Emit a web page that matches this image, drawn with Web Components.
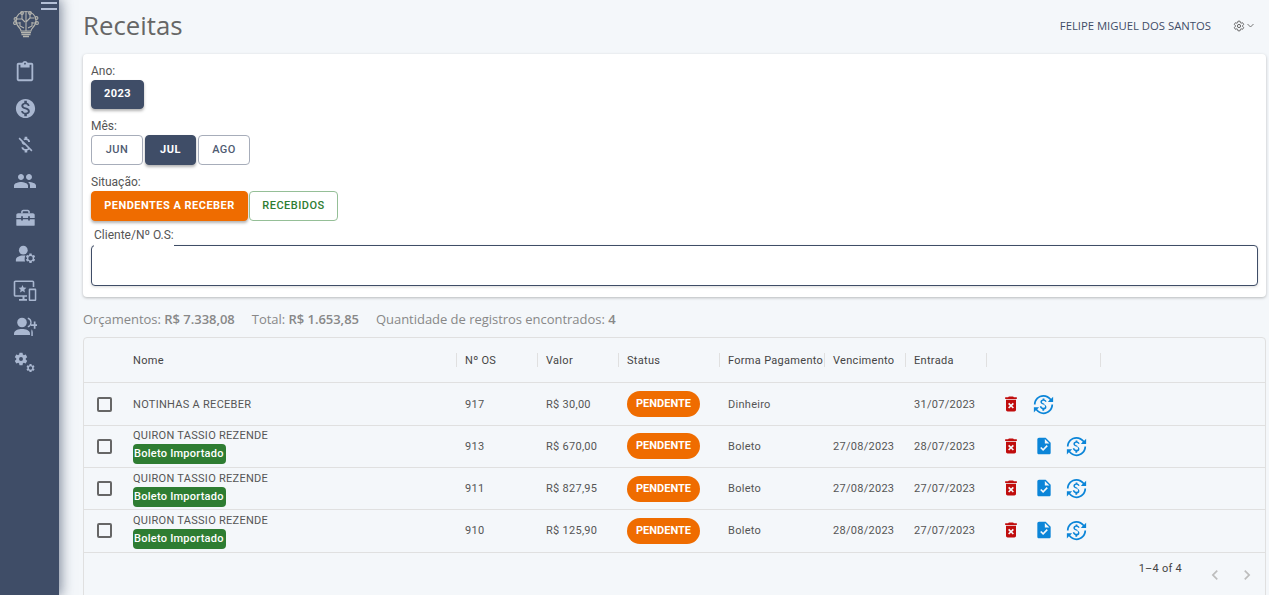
<!DOCTYPE html>
<html lang="pt-BR">
<head>
<meta charset="utf-8">
<title>Receitas</title>
<style>
  html, body { margin: 0; height: 100%; overflow: hidden; background: #f4f7fa; }
  body { font-family: Roboto, "Liberation Sans", sans-serif; }
</style>
</head>
<body>
<app-shell>
  <side-nav slot="nav"></side-nav>
  <page-top title-text="Receitas" user="FELIPE MIGUEL DOS SANTOS"></page-top>
  <filter-card>
    <filter-group label="Ano:">
      <pill-button variant="dark" w="53" h="29">2023</pill-button>
    </filter-group>
    <filter-group label="Mês:">
      <pill-button w="52">JUN</pill-button>
      <pill-button variant="dark" w="51">JUL</pill-button>
      <pill-button w="52">AGO</pill-button>
    </filter-group>
    <filter-group label="Situação:">
      <pill-button variant="orange" w="157">PENDENTES A RECEBER</pill-button>
      <pill-button variant="green" w="89">RECEBIDOS</pill-button>
    </filter-group>
    <text-field label="Cliente/Nº O.S:"></text-field>
  </filter-card>
  <summary-bar>
    <span>Orçamentos: <b>R$ 7.338,08</b></span>
    <span>Total: <b>R$ 1.653,85</b></span>
    <span>Quantidade de registros encontrados: <b>4</b></span>
  </summary-bar>
  <data-grid></data-grid>
</app-shell>

<script>
const GEAR = 'M19.14 12.940c.04-.3.06-.61.06-.94 0-.32-.02-.64-.07-.94l2.030-1.580c.18-.14.23-.41.12-.61l-1.920-3.320c-.12-.22-.37-.29-.59-.22l-2.390.96c-.5-.38-1.030-.7-1.620-.94l-.36-2.540c-.04-.24-.24-.41-.48-.41h-3.840c-.24 0-.43.17-.47.41l-.36 2.540c-.59.24-1.130.57-1.620.94l-2.390-.96c-.22-.08-.47 0-.59.22L2.740 8.870c-.12.21-.08.47.12.61l2.030 1.580c-.05.3-.09.63-.09.94s.02.64.07.94l-2.030 1.580c-.18.14-.23.41-.12.61l1.920 3.320c.12.22.37.29.59.22l2.390-.96c.5.38 1.030.7 1.620.94l.36 2.540c.05.24.24.41.48.41h3.840c.24 0 .44-.17.47-.41l.36-2.540c.59-.24 1.130-.56 1.620-.94l2.390.96c.22.08.47 0 .59-.22l1.920-3.320c.12-.22.07-.47-.12-.61l-2.010-1.580z'

const ICONS = {
  clipboard: '<path d="M19 2h-4.18C14.4.84 13.3 0 12 0c-1.3 0-2.4.84-2.82 2H5c-1.1 0-2 .9-2 2v16c0 1.1.9 2 2 2h14c1.1 0 2-.9 2-2V4c0-1.1-.9-2-2-2zm-7 0c.55 0 1 .45 1 1s-.45 1-1 1-1-.45-1-1 .45-1 1-1zm7 18H5V4h2v3h10V4h2v16z"/>',
  dollar: '<path d="M12 2C6.48 2 2 6.48 2 12s4.48 10 10 10 10-4.48 10-10S17.52 2 12 2zm1.41 16.09V20h-2.67v-1.93c-1.71-.36-3.16-1.46-3.27-3.4h1.96c.1 1.05.82 1.87 2.65 1.87 1.96 0 2.4-.98 2.4-1.59 0-.83-.44-1.61-2.67-2.14-2.48-.6-4.18-1.62-4.18-3.67 0-1.72 1.39-2.84 3.11-3.21V4h2.67v1.95c1.86.45 2.79 1.86 2.85 3.39H14.3c-.05-1.11-.64-1.87-2.22-1.87-1.5 0-2.4.68-2.4 1.64 0 .84.65 1.39 2.67 1.91s4.18 1.39 4.18 3.91c-.01 1.83-1.38 2.83-3.12 3.16z"/>',
  moneyoff: '<path d="M12.5 6.9c1.78 0 2.44.85 2.5 2.1h2.21c-.07-1.72-1.12-3.3-3.21-3.81V3h-3v2.16c-.53.12-1.03.3-1.48.54l1.47 1.47c.41-.17.91-.27 1.51-.27zM5.33 4.06 4.06 5.33 7.5 8.77c0 2.08 1.56 3.21 3.91 3.91l3.51 3.51c-.34.48-1.05.91-2.42.91-2.06 0-2.87-.92-2.98-2.1h-2.2c.12 2.19 1.76 3.42 3.68 3.83V21h3v-2.15c.96-.18 1.82-.55 2.45-1.12l2.22 2.22 1.27-1.27L5.33 4.06z"/>',
  people: '<path d="M16 11c1.66 0 2.99-1.34 2.99-3S17.66 5 16 5c-1.66 0-3 1.34-3 3s1.34 3 3 3zm-8 0c1.66 0 2.99-1.34 2.99-3S9.66 5 8 5C6.34 5 5 6.34 5 8s1.34 3 3 3zm0 2c-2.33 0-7 1.17-7 3.5V19h14v-2.5c0-2.33-4.67-3.5-7-3.5zm8 0c-.29 0-.62.02-.97.05 1.16.84 1.97 1.97 1.97 3.45V19h6v-2.5c0-2.33-4.67-3.5-7-3.5z"/>',
  toolbox: '<path d="M7 7V5.500C7 4.100 8.100 3 9.500 3h5C15.900 3 17 4.100 17 5.500V7h-1.800V5.600c0-.5-.3-.8-.8-.8H9.600c-.5 0-.8.3-.8.8V7z"/><path d="M1.500 9c0-1.100.9-2 2-2h17c1.100 0 2 .9 2 2v3.500H17v-1.800h-2v1.800H9v-1.800H7v1.800H1.500z"/><path d="M1.500 14h5.500v1.500h2V14h6v1.500h2V14h5.500v6.500c0 .6-.4 1-1 1h-19c-.6 0-1-.4-1-1z"/>',
  manage: `<circle cx="9.500" cy="7" r="5"/><path d="M1 20v-2c0-3 4-5 8.500-5 .9 0 1.700.1 2.500.2-.6 1.100-1 2.400-1 3.800 0 1.100.2 2.100.6 3z"/><g transform="translate(11 9.500) scale(.56)"><path fill-rule="evenodd" d="${GEAR}M12 16.500a4.500 4.500 0 1 1 0-9 4.500 4.500 0 0 1 0 9z"/></g>`,
  devices: '<path fill-rule="evenodd" d="M2.500 1.500h17c1 0 1.800.8 1.800 1.800V8h-1.600V3.300c0-.1-.1-.2-.2-.2h-17c-.1 0-.2.1-.2.2V16c0 .1.1.2.2.2h11.500v1.600H11.500V20H14v1.800H6V20h3.500v-2.200h-7c-1 0-1.800-.8-1.800-1.800V3.300c0-1 .8-1.800 1.800-1.800z"/><path d="m9.500 6 1.100 2.600 2.800.2-2.100 1.900.7 2.800-2.500-1.500L7 13.500l.7-2.800-2.100-1.900 2.800-.2z"/><path fill-rule="evenodd" d="M17 9.500h5c.8 0 1.300.5 1.300 1.300v10c0 .8-.5 1.300-1.300 1.300h-5c-.8 0-1.300-.5-1.300-1.300v-10c0-.8.5-1.300 1.300-1.300zm.2 1.700v9.200h4.600v-9.200z"/>',
  personadd: '<circle cx="9" cy="7.500" r="4.800"/><path d="M1 20v-1.500C1 15.400 5.500 14 9 14s8 1.400 8 4.500V20z"/><path d="M14.800 3.200c1.800.6 3.200 2.300 3.200 4.300s-1.400 3.700-3.200 4.300" fill="none" stroke="currentColor" stroke-width="1.300"/><path d="M18.700 14.300c.7.9 1.100 2 1.100 3.200V21h-1.500v-5z"/><path d="M20.800 6.500h1.700v2.800h1.500v1.700h-1.500v2.800h-1.700V11H18V9.300h2.800z"/>',
  gears: `<g transform="translate(-1 -1) scale(.72)"><path fill-rule="evenodd" d="${GEAR}M12 15a3 3 0 1 1 0-6 3 3 0 0 1 0 6z"/></g><g transform="translate(12.500 12) scale(.46)"><path fill-rule="evenodd" d="${GEAR}M12 16a4 4 0 1 1 0-8 4 4 0 0 1 0 8z"/></g>`,
  gearline: `<path fill="none" stroke="currentColor" stroke-width="2" d="${GEAR}"/><circle cx="12" cy="12" r="3.200" fill="none" stroke="currentColor" stroke-width="2"/>`,
  chevdown: '<path d="M4 8l8 8 8-8" fill="none" stroke="currentColor" stroke-width="2.400"/>',
  chevleft: '<path d="M15.410 7.410 14 6l-6 6 6 6 1.410-1.410L10.830 12z"/>',
  chevright: '<path d="M10 6 8.590 7.410 13.170 12l-4.580 4.590L10 18l6-6z"/>',
  trash: '<path d="M6 19c0 1.100.9 2 2 2h8c1.100 0 2-.9 2-2V7H6v12zm2.460-7.120 1.410-1.410L12 12.590l2.120-2.120 1.410 1.410L13.410 14l2.120 2.120-1.410 1.410L12 15.410l-2.120 2.120-1.410-1.410L10.590 14l-2.130-2.120zM15.500 4l-1-1h-5l-1 1H5v2h14V4z"/>',
  filecheck: '<path d="M14 2H6c-1.100 0-2 .9-2 2v16c0 1.100.9 2 2 2h12c1.100 0 2-.9 2-2V8l-6-6zm-3.060 16L7.400 14.460l1.410-1.410 2.120 2.120 4.240-4.240 1.410 1.410L10.940 18zM13 9V3.500L18.500 9H13z"/>',
  exchange: '<path d="M12.890 11.100c-1.780-.59-2.640-.96-2.640-1.900 0-1.020 1.110-1.390 1.810-1.390 1.310 0 1.790.99 1.900 1.340l1.580-.67c-.15-.44-.82-1.910-2.540-2.280V5h-2v1.260c-.48.11-2.560.66-2.560 2.720 0 1.600 1.270 2.510 3.060 3.150 1.570.56 2.260 1.070 2.260 2.030 0 1.130-1.050 1.610-1.980 1.610-1.820 0-2.340-1.870-2.400-2.090l-1.660.67c.63 2.190 2.280 2.780 3.020 2.960V19h2v-1.240c.52-.09 2.580-.5 2.580-2.700.01-1.160-.5-2.180-2.430-2.960z"/><path d="M3 12C3 7 7 3 12 3c3 0 5.600 1.500 7.200 3.700L17 9h6V3l-2.300 2.300C18.700 2.700 15.500 1 12 1 5.900 1 1 5.900 1 12zM21 12c0 5-4 9-9 9-3 0-5.600-1.500-7.200-3.700L7 15H1v6l2.300-2.300C5.300 21.300 8.500 23 12 23c6.100 0 11-4.900 11-11z"/>',
}

class XIcon extends HTMLElement {
  connectedCallback() {
    const size = this.getAttribute('size') || 24
    const root = this.shadowRoot || this.attachShadow({ mode: 'open' })
    root.innerHTML = `
      <style>
        :host { display: inline-flex; flex: none; color: inherit; }
        svg { display: block; fill: currentColor; }
      </style>
      <svg width="${size}" height="${size}" viewBox="0 0 24 24">${ICONS[this.getAttribute('name')] || ''}</svg>`
  }
}
customElements.define('x-icon', XIcon)

const shellTpl = document.createElement('template')
shellTpl.innerHTML = `
  <style>
    :host { display: flex; height: 595px; overflow: hidden; }
    .main { flex: 1; min-width: 0; padding: 0 3px 0 24px; display: flex; flex-direction: column; }
  </style>
  <slot name="nav"></slot>
  <div class="main"><slot></slot></div>
`
class AppShell extends HTMLElement {
  constructor() {
    super()
    this.attachShadow({ mode: 'open' }).appendChild(shellTpl.content.cloneNode(true))
  }
}
customElements.define('app-shell', AppShell)

const navTpl = document.createElement('template')
navTpl.innerHTML = `
  <style>
    :host {
      display: flex; flex-direction: column; flex: none; width: 59px; height: 595px;
      background: #3f4d67; color: #a9b7d0;
      box-shadow: 1px 0 12px 1px rgba(63, 77, 103, .65);
      position: relative; z-index: 2;
    }
    .burger { align-self: flex-end; display: flex; flex-direction: column; gap: 4px; margin: 2px 2px 0 0; }
    .burger i { display: block; width: 16px; height: 2px; background: #b4c0d6; }
    .logo { display: flex; justify-content: center; margin: 0 7px 0 0; height: 28px; }
    nav { display: flex; flex-direction: column; align-items: center; margin: 16px 9px 0 0; }
    nav div { height: 36.4px; display: flex; align-items: center; justify-content: center; }
  </style>
  <div class="burger"><i></i><i></i></div>
  <div class="logo">
    <svg width="26" height="28" viewBox="0 0 26 28" fill="none" stroke="#b4b4ae" stroke-width="1.100">
      <path d="M13 1.500C7 1.500 3 5.500 3 10.500c0 3.500 2 6 3.500 7.500 1 1 1.500 2 1.500 3h10c0-1 .5-2 1.500-3 1.500-1.500 3.500-4 3.500-7.500 0-5-4-9-10-9z"/>
      <path d="M13 1.500V21M9 3v6H4M9 9l3 3M17 3v5h4M17 8l-4 4M7 12v4l4 2M19 12v4l-4 2M3 13h4M23 13h-4"/>
      <circle cx="9" cy="3" r="1.400"/><circle cx="17" cy="3" r="1.400"/><circle cx="2.500" cy="9" r="1.400"/><circle cx="23.500" cy="8" r="1.400"/><circle cx="2" cy="13" r="1.400"/><circle cx="24" cy="13" r="1.400"/>
      <path d="M8 22.500h10M8.500 24.500h9M10 26.500h6" stroke-width="1.500"/>
    </svg>
  </div>
  <nav>
    <div><x-icon name="clipboard" size="22"></x-icon></div>
    <div><x-icon name="dollar" size="23"></x-icon></div>
    <div><x-icon name="moneyoff" size="21"></x-icon></div>
    <div><x-icon name="people" size="24"></x-icon></div>
    <div><x-icon name="toolbox" size="21"></x-icon></div>
    <div><x-icon name="manage" size="21"></x-icon></div>
    <div><x-icon name="devices" size="24"></x-icon></div>
    <div><x-icon name="personadd" size="24"></x-icon></div>
    <div><x-icon name="gears" size="22"></x-icon></div>
  </nav>
`
class SideNav extends HTMLElement {
  constructor() {
    super()
    this.attachShadow({ mode: 'open' }).appendChild(navTpl.content.cloneNode(true))
  }
}
customElements.define('side-nav', SideNav)

class PageTop extends HTMLElement {
  connectedCallback() {
    const root = this.shadowRoot || this.attachShadow({ mode: 'open' })
    root.innerHTML = `
      <style>
        :host { display: flex; align-items: center; height: 54px; flex: none; font-family: "Open Sans", sans-serif; }
        h1 { margin: 0 0 5px; font-size: 25.800px; font-weight: 400; color: #666; flex: 1; }
        .user { font-size: 11.300px; color: #3f4d67; margin-right: 22px; margin-bottom: 3px; }
        .gear { display: flex; align-items: center; gap: 1px; color: #666; margin-right: 11px; margin-bottom: 3px; }
      </style>
      <h1>${this.getAttribute('title-text')}</h1>
      <span class="user">${this.getAttribute('user')}</span>
      <span class="gear"><x-icon name="gearline" size="12"></x-icon><x-icon name="chevdown" size="9"></x-icon></span>`
  }
}
customElements.define('page-top', PageTop)

const cardTpl = document.createElement('template')
cardTpl.innerHTML = `
  <style>
    :host {
      display: flex; flex-direction: column; gap: 9px; flex: none;
      height: 243px; box-sizing: border-box; padding: 9px 8px 11px 8px;
      background: #fff; border-radius: 4px;
      box-shadow: 0 1px 3px rgba(0, 0, 0, .25);
    }
  </style>
  <slot></slot>
`
class FilterCard extends HTMLElement {
  constructor() {
    super()
    this.attachShadow({ mode: 'open' }).appendChild(cardTpl.content.cloneNode(true))
  }
}
customElements.define('filter-card', FilterCard)

class FilterGroup extends HTMLElement {
  connectedCallback() {
    const root = this.shadowRoot || this.attachShadow({ mode: 'open' })
    root.innerHTML = `
      <style>
        :host { display: block; }
        label { display: block; font: 400 12px/16px Roboto, sans-serif; color: #555; margin-bottom: 1px; }
        .row { display: flex; gap: 2px; }
      </style>
      <label>${this.getAttribute('label')}</label>
      <div class="row"><slot></slot></div>`
  }
}
customElements.define('filter-group', FilterGroup)

class PillButton extends HTMLElement {
  connectedCallback() {
    const root = this.shadowRoot || this.attachShadow({ mode: 'open' })
    const w = this.getAttribute('w')
    const h = this.getAttribute('h') || 30
    root.innerHTML = `
      <style>
        :host {
          display: inline-flex; align-items: center; justify-content: center; box-sizing: border-box;
          width: ${w}px; height: ${h}px; padding-bottom: 2px; border-radius: 4px; background: #fff;
          border: 1px solid #a7adba; color: #4f5b72;
          font: 500 11px/1 Roboto, sans-serif; letter-spacing: .48px;
        }
        :host([variant="dark"]) {
          background: #3f4d67; border-color: #3f4d67; color: #fff; font-weight: 700;
          box-shadow: 0 2px 3px rgba(0, 0, 0, .3);
        }
        :host([variant="orange"]) {
          background: #ef6c00; border-color: #ef6c00; color: #fff; font-weight: 700;
          box-shadow: 0 2px 3px rgba(0, 0, 0, .3); margin-right: -1px;
        }
        :host([variant="green"]) { border-color: #95bf97; color: #2e7d32; }
      </style>
      <slot></slot>`
  }
}
customElements.define('pill-button', PillButton)

class TextField extends HTMLElement {
  connectedCallback() {
    const root = this.shadowRoot || this.attachShadow({ mode: 'open' })
    root.innerHTML = `
      <style>
        :host { display: block; position: relative; margin-top: 15px; }
        .box {
          height: 41px; box-sizing: border-box; border: 1px solid #3f4d67; border-radius: 4px; background: #fff;
          box-shadow: 0 1px 3px rgba(0, 0, 0, .15);
        }
        label {
          position: absolute; left: 3px; top: -18px; padding: 0 0 4px; background: #fff;
          font: 400 12px/16px Roboto, sans-serif; color: #555;
        }
      </style>
      <div class="box"></div>
      <label>${this.getAttribute('label')}</label>`
  }
}
customElements.define('text-field', TextField)

const summaryTpl = document.createElement('template')
summaryTpl.innerHTML = `
  <style>
    :host {
      display: flex; gap: 17px; align-items: center; flex: none; height: 40px; padding-top: 3px; box-sizing: border-box;
      font: 400 13px "Open Sans", sans-serif; color: #888;
    }
    ::slotted(span) { white-space: pre; letter-spacing: -.03px; }
  </style>
  <slot></slot>
`
class SummaryBar extends HTMLElement {
  constructor() {
    super()
    this.attachShadow({ mode: 'open' }).appendChild(summaryTpl.content.cloneNode(true))
  }
}
customElements.define('summary-bar', SummaryBar)

const rowTpl = document.createElement('template')
rowTpl.innerHTML = `
  <style>
    :host {
      display: grid; grid-template-columns: var(--cols); align-items: center;
      height: var(--row-h, 42.25px); box-sizing: border-box; border-bottom: 1px solid #e0e0e0;
    }
    ::slotted(*) { padding-left: 8px; box-sizing: border-box; min-width: 0; white-space: nowrap; }
    ::slotted(check-box) { padding-left: 0; justify-self: center; }
  </style>
  <slot></slot>
`
class GridRow extends HTMLElement {
  constructor() {
    super()
    this.attachShadow({ mode: 'open' }).appendChild(rowTpl.content.cloneNode(true))
  }
}
customElements.define('grid-row', GridRow)

class HeadCell extends HTMLElement {
  constructor() {
    super()
    this.attachShadow({ mode: 'open' }).innerHTML = `
      <style>
        :host { display: flex; align-items: center; }
        i { width: 1px; height: 14px; background: #e0e0e0; flex: none; margin-left: auto; }
      </style>
      <slot></slot><i></i>`
  }
}
customElements.define('head-cell', HeadCell)

class CheckBox extends HTMLElement {
  constructor() {
    super()
    this.attachShadow({ mode: 'open' }).innerHTML = `
      <style>
        :host { display: block; width: 15px; height: 15px; box-sizing: border-box; border: 2px solid #666; border-radius: 2px; margin-right: 1px; }
      </style>`
  }
}
customElements.define('check-box', CheckBox)

class StatusChip extends HTMLElement {
  constructor() {
    super()
    this.attachShadow({ mode: 'open' }).innerHTML = `
      <style>
        :host {
          display: inline-flex; align-items: center; justify-content: center; width: 73px; height: 26px;
          border-radius: 13px; background: #ef6c00; color: #fff; letter-spacing: 0; padding-bottom: 1px; box-sizing: border-box;
          font: 700 11px Roboto, sans-serif;
        }
      </style>
      <slot></slot>`
  }
}
customElements.define('status-chip', StatusChip)

class BoletoTag extends HTMLElement {
  constructor() {
    super()
    this.attachShadow({ mode: 'open' }).innerHTML = `
      <style>
        :host {
          display: block; width: 93px; height: 20px; box-sizing: border-box; padding-left: 1px;
          border-radius: 4px; background: #2e7d32; color: #fff; margin-top: 1px;
          font: 500 11px/20px Roboto, sans-serif; letter-spacing: .25px; white-space: nowrap;
        }
      </style>
      <slot></slot>`
  }
}
customElements.define('boleto-tag', BoletoTag)

const RECORDS = [
  { name: 'NOTINHAS A RECEBER', os: '917', valor: 'R$ 30,00', forma: 'Dinheiro', venc: '', entrada: '31/07/2023' },
  { name: 'QUIRON TASSIO REZENDE', tag: true, os: '913', valor: 'R$ 670,00', forma: 'Boleto', venc: '27/08/2023', entrada: '28/07/2023' },
  { name: 'QUIRON TASSIO REZENDE', tag: true, os: '911', valor: 'R$ 827,95', forma: 'Boleto', venc: '27/08/2023', entrada: '27/07/2023' },
  { name: 'QUIRON TASSIO REZENDE', tag: true, os: '910', valor: 'R$ 125,90', forma: 'Boleto', venc: '28/08/2023', entrada: '27/07/2023' },
]

class DataGrid extends HTMLElement {
  connectedCallback() {
    const root = this.shadowRoot || this.attachShadow({ mode: 'open' })
    const heads = ['Nome', 'Nº OS', 'Valor', 'Status', 'Forma Pagamento', 'Vencimento', 'Entrada', '']
    const rows = RECORDS.map(r => `
      <grid-row>
        <check-box></check-box>
        <div class="name"><div>${r.name}</div>${r.tag ? '<boleto-tag>Boleto Importado</boleto-tag>' : ''}</div>
        <span>${r.os}</span>
        <span>${r.valor}</span>
        <span><status-chip>PENDENTE</status-chip></span>
        <span>${r.forma}</span>
        <span>${r.venc}</span>
        <span>${r.entrada}</span>
        <div class="actions">
          <span class="act red"><x-icon name="trash" size="20"></x-icon></span>
          ${r.tag ? '<span class="act blue"><x-icon name="filecheck" size="20"></x-icon></span>' : ''}
          <span class="act blue"><x-icon name="exchange" size="21"></x-icon></span>
        </div>
      </grid-row>`).join('')
    root.innerHTML = `
      <style>
        :host {
          display: block; flex: none; height: 280px; box-sizing: border-box;
          border: 1px solid #e0e0e0; border-radius: 4px;
          --cols: 41px 332px 81px 81px 101px 105px 81px 81px 114px;
          font: 400 11px Roboto, sans-serif; letter-spacing: .28px; color: #555;
        }
        .head { --row-h: 45px; margin-bottom: .6px; color: #444; letter-spacing: .3px; }
        .name { padding-top: 1px; }
        .name > div { line-height: 14px; }
        .actions { display: flex; }
        .act { display: flex; justify-content: center; width: 32.5px; }
        .red { color: #c00d0d; }
        .blue { color: #0b85d8; }
        .foot { display: flex; height: 38px; justify-content: flex-end; color: #444; letter-spacing: .25px; }
        .count { margin: 8px 23px 0 0; line-height: 15px; }
        .nav { display: flex; gap: 12px; margin: 12px 8px 0 0; color: #bdbdbd; }
      </style>
      <grid-row class="head">
        <span></span>
        ${heads.map(h => `<head-cell>${h}</head-cell>`).join('')}
      </grid-row>
      ${rows}
      <div class="foot">
        <span class="count">1–4 of 4</span>
        <span class="nav"><x-icon name="chevleft" size="20"></x-icon><x-icon name="chevright" size="20"></x-icon></span>
      </div>`
  }
}
customElements.define('data-grid', DataGrid)

// summary values are semi-bold in the reference
document.querySelectorAll('summary-bar b').forEach(b => { b.style.fontWeight = '600' })
</script>
</body>
</html>
